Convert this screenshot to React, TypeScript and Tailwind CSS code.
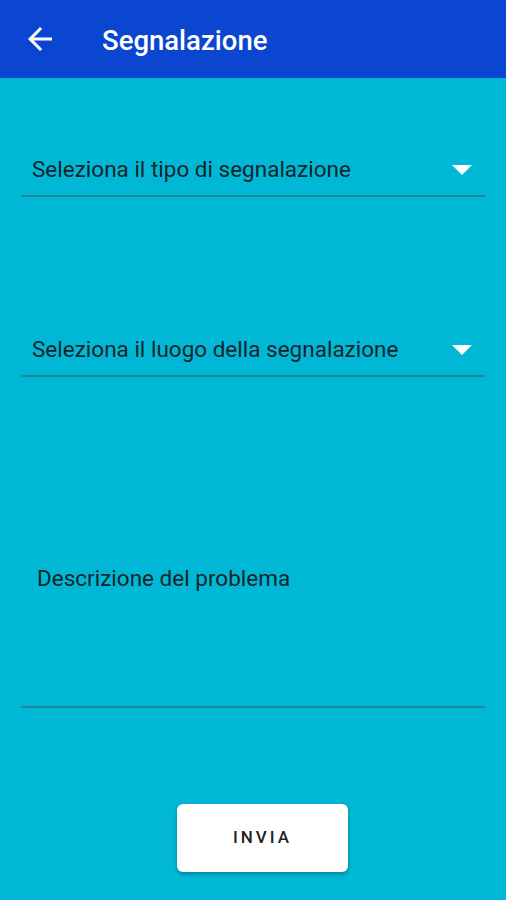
const ArrowBack = () => (
  <svg width="36" height="36" viewBox="0 0 24 24" fill="white">
    <path d="M20 11H7.83l5.59-5.59L12 4l-8 8 8 8 1.41-1.41L7.83 13H20v-2z" />
  </svg>
);

const Caret = () => (
  <svg width="20" height="10" viewBox="0 0 20 10" fill="white">
    <path d="M0 0h20L10 10z" />
  </svg>
);

const Dropdown = ({ label }: { label: string }) => (
  <div className="flex h-[53px] items-center justify-between border-b-[2px] border-[#1f8597] pl-[11px] pr-[13px]">
    <span className="text-[22.5px] text-[#13262b]">{label}</span>
    <Caret />
  </div>
);

export default function App() {
  return (
    <div className="flex h-[900px] w-[506px] flex-col bg-[#00b8d6] font-['Roboto',sans-serif]">
      <div className="flex h-[78px] shrink-0 items-center bg-[#0a46cf] pl-[22px]">
        <ArrowBack />
        <span className="ml-[44px] mt-[3px] text-[27.5px] font-medium text-white">Segnalazione</span>
      </div>

      <div className="flex flex-col px-[21px]">
        <div className="mt-[66px]">
          <Dropdown label="Seleziona il tipo di segnalazione" />
        </div>
        <div className="mt-[127px]">
          <Dropdown label="Seleziona il luogo della segnalazione" />
        </div>
        <div className="mt-[189px] h-[142px] border-b-[2px] border-[#1f8597] pl-[16px]">
          <span className="text-[22.5px] leading-[24px] text-[#13262b]">Descrizione del problema</span>
        </div>
      </div>

      <button className="ml-[177px] mt-[96px] flex h-[68px] w-[171px] items-center justify-center rounded-[6px] bg-white text-[17px] font-medium tracking-[3px] text-[#222] shadow-[0_2px_4px_rgba(0,0,0,0.3)]">
        INVIA
      </button>
    </div>
  );
}
